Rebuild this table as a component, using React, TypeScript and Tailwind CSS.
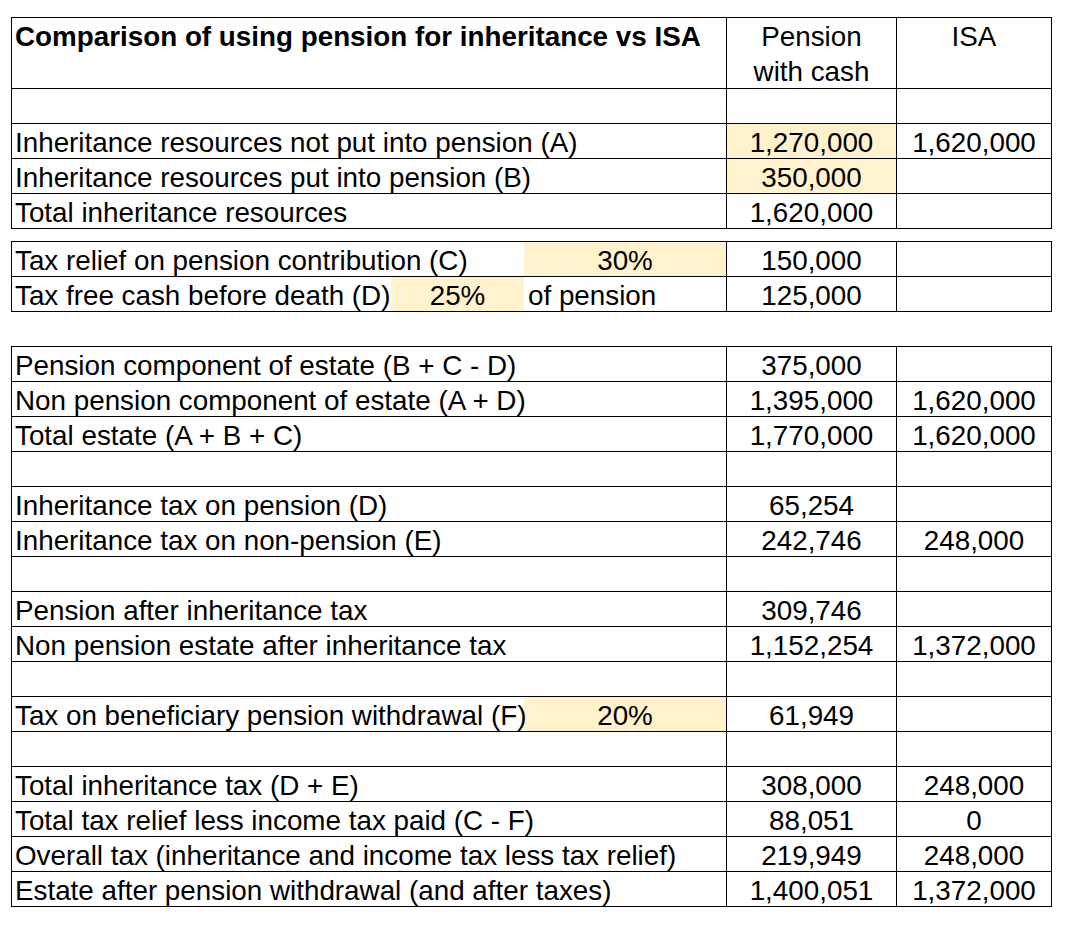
import React from "react"

type Row = {
  label?: string
  rate?: string
  ratePos?: "end" | "mid"
  note?: string
  pension?: string
  isa?: string
  pensionInput?: boolean
}

const HI = "bg-[#fff2cc]"
const cell = "h-full pt-[3px] leading-[31px]"

const resources: Row[] = [
  {},
  { label: "Inheritance resources not put into pension (A)", pension: "1,270,000", isa: "1,620,000", pensionInput: true },
  { label: "Inheritance resources put into pension (B)", pension: "350,000", pensionInput: true },
  { label: "Total inheritance resources", pension: "1,620,000" },
]

const assumptions: Row[] = [
  { label: "Tax relief on pension contribution (C)", rate: "30%", ratePos: "end", pension: "150,000" },
  { label: "Tax free cash before death (D)", rate: "25%", ratePos: "mid", note: "of pension", pension: "125,000" },
]

const results: Row[] = [
  { label: "Pension component of estate (B + C - D)", pension: "375,000" },
  { label: "Non pension component of estate (A + D)", pension: "1,395,000", isa: "1,620,000" },
  { label: "Total estate (A + B + C)", pension: "1,770,000", isa: "1,620,000" },
  {},
  { label: "Inheritance tax on pension (D)", pension: "65,254" },
  { label: "Inheritance tax on non-pension (E)", pension: "242,746", isa: "248,000" },
  {},
  { label: "Pension after inheritance tax", pension: "309,746" },
  { label: "Non pension estate after inheritance tax", pension: "1,152,254", isa: "1,372,000" },
  {},
  { label: "Tax on beneficiary pension withdrawal (F)", rate: "20%", ratePos: "end", pension: "61,949" },
  {},
  { label: "Total inheritance tax (D + E)", pension: "308,000", isa: "248,000" },
  { label: "Total tax relief less income tax paid (C - F)", pension: "88,051", isa: "0" },
  { label: "Overall tax (inheritance and income tax less tax relief)", pension: "219,949", isa: "248,000" },
  { label: "Estate after pension withdrawal (and after taxes)", pension: "1,400,051", isa: "1,372,000" },
]

function SheetRow({ row }: { row: Row }) {
  return (
    <div className="flex h-[35px] border-b border-black">
      <div className="flex w-[715px] border-r border-black">
        <div className={`${cell} relative z-10 min-w-0 flex-1 whitespace-nowrap pl-[3px]`}>{row.label}</div>
        {row.ratePos === "mid" && (
          <>
            <div className={`${cell} w-[133px] text-center ${HI}`}>{row.rate}</div>
            <div className={`${cell} w-[202px] whitespace-nowrap pl-[4px]`}>{row.note}</div>
          </>
        )}
        {row.ratePos === "end" && (
          <div className={`${cell} w-[202px] text-center ${HI}`}>{row.rate}</div>
        )}
      </div>
      <div className={`${cell} w-[170px] border-r border-black text-center ${row.pensionInput ? HI : ""}`}>
        {row.pension}
      </div>
      <div className={`${cell} w-[154px] text-center`}>{row.isa}</div>
    </div>
  )
}

function Sheet({ rows, header, className = "" }: { rows: Row[]; header?: boolean; className?: string }) {
  return (
    <div className={`w-[1041px] border-l border-r border-t border-black ${className}`}>
      {header && (
        <div className="flex h-[71px] border-b border-black leading-[35px]">
          <div className="w-[715px] whitespace-nowrap border-r border-black pl-[3px] pt-[1px] font-bold">
            Comparison of using pension for inheritance vs ISA
          </div>
          <div className="w-[170px] border-r border-black pt-[1px] text-center">
            Pension
            <br />
            with cash
          </div>
          <div className="w-[154px] pt-[1px] text-center">ISA</div>
        </div>
      )}
      {rows.map((row, i) => (
        <SheetRow key={i} row={row} />
      ))}
    </div>
  )
}

export default function App() {
  return (
    <div className="min-h-screen bg-white pl-[11px] pt-[17px] font-['Liberation_Sans',Arial,sans-serif] text-[27.8px] text-black">
      <Sheet rows={resources} header />
      <Sheet rows={assumptions} className="mt-[12px]" />
      <Sheet rows={results} className="mt-[34px]" />
    </div>
  )
}
